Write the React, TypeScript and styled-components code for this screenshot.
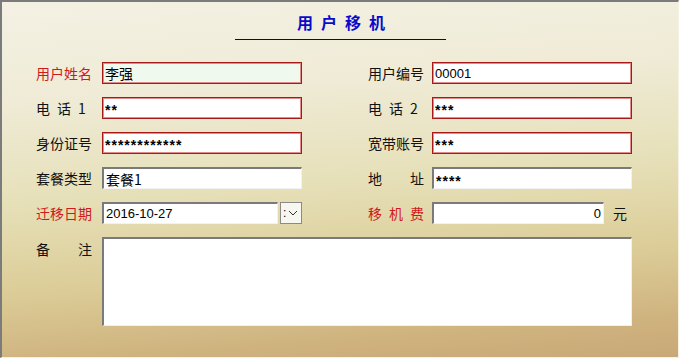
import React from 'react';
import styled, {createGlobalStyle} from 'styled-components';

// ==================== 全局样式 ====================

const GlobalStyle = createGlobalStyle`
  html, body {
    margin: 0;
    padding: 0;
    background: #ffffff;
  }
  * {
    box-sizing: border-box;
  }
`;

const CJK = `"Noto Sans CJK SC", sans-serif`;
const LATIN = `"Liberation Sans", "Noto Sans CJK SC", sans-serif`;

// ==================== 样式组件 ====================

// 窗体外框（凹陷边框 + 渐变背景）
const Frame = styled.div`
  width: 679px;
  height: 358px;
  border-style: solid;
  border-width: 2px 1px 1px 2px;
  border-color: #7b7b7b #f6f1e4 #f6f1e4 #7b7b7b;
  background: linear-gradient(176deg, #f4f1e4 0%, #efebd6 25%, #e6e0b9 50%, #dccd98 72%, #cfb37f 90%, #c8a877 100%);
  padding: 10px 0 0 34px;
  display: flex;
  flex-direction: column;
`;

const TitleBlock = styled.div`
  display: flex;
  flex-direction: column;
  align-items: center;
  margin-left: -34px;
`;

const Title = styled.h1`
  margin: 0;
  font-family: ${CJK};
  font-size: 16px;
  line-height: 20px;
  font-weight: 700;
  color: #0a0acc;
  letter-spacing: 8px;
  padding-left: 10px;
`;

const TitleLine = styled.div`
  width: 211px;
  height: 1px;
  margin-top: 7px;
  background: #101020;
`;

const Form = styled.div`
  margin-top: 22px;
  display: grid;
  grid-template-columns: 266px 266px;
  column-gap: 66px;
  row-gap: 13px;
`;

const Field = styled.div<{ $labelW: number; $full?: boolean }>`
  display: grid;
  grid-template-columns: ${p => p.$labelW}px auto;
  align-items: ${p => (p.$full ? 'start' : 'center')};
  height: ${p => (p.$full ? '89px' : '22px')};
  ${p => p.$full && 'grid-column: 1 / span 2;'}
`;

const Label = styled.span<{ $red?: boolean; $spread?: boolean; $top?: number }>`
  display: block;
  width: 56px;
  font-family: ${CJK};
  font-size: 14px;
  line-height: 18px;
  color: ${p => (p.$red ? '#d01a1a' : '#111111')};
  white-space: pre;
  padding-top: ${p => p.$top || 0}px;
  ${p => p.$spread && `
    text-align: justify;
    text-align-last: justify;
    white-space: normal;
  `}
`;

const InputBox = styled.div<{ $kind: 'red' | 'sunken'; $width?: number; $tint?: boolean; $right?: boolean }>`
  width: ${p => p.$width || 200}px;
  height: 22px;
  display: flex;
  align-items: center;
  justify-content: ${p => (p.$right ? 'flex-end' : 'flex-start')};
  padding: 0 2px;
  font-family: ${LATIN};
  font-size: 13px;
  color: #000;
  white-space: nowrap;
  background: ${p => (p.$tint ? '#f0f9ee' : '#ffffff')};
  ${p => p.$kind === 'red' ? `
    border: 1px solid #a81a1a;
    box-shadow: inset 0 0 0 1px #e28a8a;
  ` : `
    border-style: solid;
    border-width: 2px 1px 1px 2px;
    border-color: #7a7a7a #f2f2f2 #f2f2f2 #7a7a7a;
  `}
`;

const CjkText = styled.span`
  font-family: ${CJK};
  font-size: 14px;
`;

// 密码掩码星号
const Stars = styled.span`
  font-family: ${LATIN};
  font-size: 14px;
  font-weight: 700;
  letter-spacing: 1px;
  padding-top: 4px;
`;

const Inline = styled.div`
  display: flex;
  align-items: center;
  gap: 2px;
`;

const DropButton = styled.div`
  width: 22px;
  height: 22px;
  border: 1px solid #8a8a8a;
  background: #f7f7f2;
  display: flex;
  align-items: center;
  padding-left: 2px;
  gap: 2px;
`;

const Colon = styled.span`
  font-family: ${LATIN};
  font-size: 12px;
  line-height: 12px;
  color: #000;
`;

const Unit = styled.span`
  font-family: ${CJK};
  font-size: 14px;
  color: #111;
  margin-left: 7px;
`;

const NotesBox = styled.div`
  width: 530px;
  height: 89px;
  background: #ffffff;
  border-style: solid;
  border-width: 2px 1px 1px 2px;
  border-color: #7a7a7a #f4efe8 #f4efe8 #7a7a7a;
`;

// ==================== 主组件 ====================

const App: React.FC = () => {
    return (
        <>
            <GlobalStyle/>
            <Frame>
                <TitleBlock>
                    <Title>用户移机</Title>
                    <TitleLine/>
                </TitleBlock>

                <Form>
                    <Field $labelW={66}>
                        <Label $red>用户姓名</Label>
                        <InputBox $kind="red" $tint><CjkText>李强</CjkText></InputBox>
                    </Field>
                    <Field $labelW={64}>
                        <Label>用户编号</Label>
                        <InputBox $kind="red">00001</InputBox>
                    </Field>

                    <Field $labelW={66}>
                        <Label>{'电\u2002话\u20021'}</Label>
                        <InputBox $kind="red"><Stars>**</Stars></InputBox>
                    </Field>
                    <Field $labelW={64}>
                        <Label>{'电\u2002话\u20022'}</Label>
                        <InputBox $kind="red"><Stars>***</Stars></InputBox>
                    </Field>

                    <Field $labelW={66}>
                        <Label>身份证号</Label>
                        <InputBox $kind="red"><Stars>************</Stars></InputBox>
                    </Field>
                    <Field $labelW={64}>
                        <Label>宽带账号</Label>
                        <InputBox $kind="red"><Stars>***</Stars></InputBox>
                    </Field>

                    <Field $labelW={66}>
                        <Label>套餐类型</Label>
                        <InputBox $kind="sunken"><CjkText>套餐1</CjkText></InputBox>
                    </Field>
                    <Field $labelW={64}>
                        <Label $spread>地 址</Label>
                        <InputBox $kind="sunken"><Stars>****</Stars></InputBox>
                    </Field>

                    <Field $labelW={66}>
                        <Label $red>迁移日期</Label>
                        <Inline>
                            <InputBox $kind="sunken" $width={176}>2016-10-27</InputBox>
                            <DropButton>
                                <Colon>:</Colon>
                                <svg width="10" height="6" viewBox="0 0 10 6">
                                    <path d="M1 1 L5 5 L9 1" fill="none" stroke="#333" strokeWidth="1"/>
                                </svg>
                            </DropButton>
                        </Inline>
                    </Field>
                    <Field $labelW={64}>
                        <Label $red $spread>移 机 费</Label>
                        <Inline>
                            <InputBox $kind="sunken" $width={172} $right>0</InputBox>
                            <Unit>元</Unit>
                        </Inline>
                    </Field>

                    <Field $labelW={66} $full>
                        <Label $spread $top={3}>备 注</Label>
                        <NotesBox/>
                    </Field>
                </Form>
            </Frame>
        </>
    );
};

export default App;
